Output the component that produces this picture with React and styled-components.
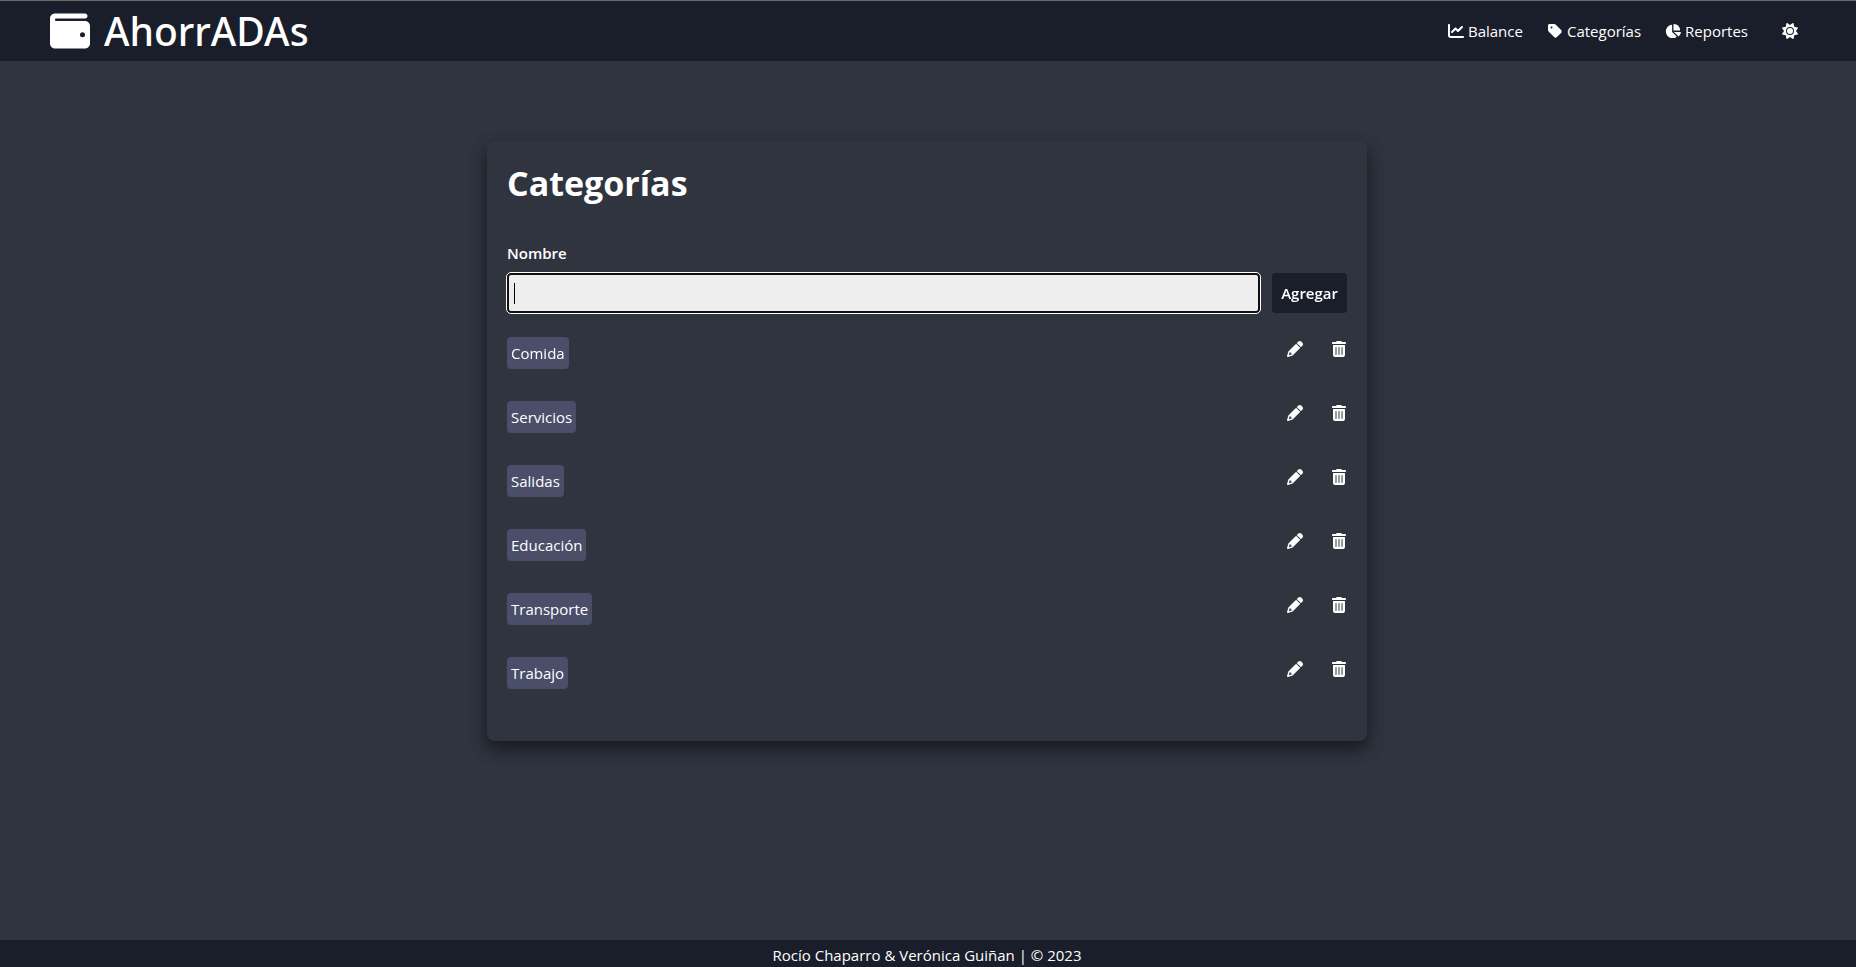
import React, { useState } from "react";
import styled, { createGlobalStyle } from "styled-components";
import {
  FaWallet,
  FaChartLine,
  FaTag,
  FaChartPie,
  FaSun,
  FaTrashCan,
} from "react-icons/fa6";

const colors = {
  page: "#30343f",
  bar: "#191e2a",
  chip: "#4a4e69",
  field: "#eeeeee",
  text: "#ffffff",
};

const GlobalStyle = createGlobalStyle`
  *, *::before, *::after { box-sizing: border-box; }
  body {
    margin: 0;
    background: ${colors.page};
    color: ${colors.text};
    font-family: "Segoe UI", "Open Sans", "Noto Sans", sans-serif;
    font-size: 15px;
    line-height: 24px;
  }
  h1, ul, p { margin: 0; padding: 0; }
  ul { list-style: none; }
  button, input { font: inherit; }
  svg { display: block; flex: none; }
`;

const Page = styled.div`
  min-height: 100vh;
  display: flex;
  flex-direction: column;
`;

const Header = styled.header`
  display: flex;
  align-items: center;
  justify-content: space-between;
  height: 61px;
  padding: 0 56px 0 50px;
  background: ${colors.bar};
  border-top: 1px solid #6a6a6a;
`;

const Brand = styled.a`
  display: flex;
  align-items: center;
  gap: 14px;
  color: inherit;
  text-decoration: none;
  font-family: "Segoe UI", "Noto Sans", sans-serif;
  font-size: 39px;
  font-weight: 500;
  line-height: 60px;
`;

const Nav = styled.nav`
  display: flex;
  align-items: center;
  gap: 24px;
`;

const NavLink = styled.a`
  display: flex;
  align-items: center;
  gap: 4px;
  color: inherit;
  text-decoration: none;

  svg {
    width: auto;
    height: 16px;
  }
`;

const IconButton = styled.button`
  display: flex;
  padding: 0;
  border: 0;
  background: none;
  color: inherit;
  cursor: pointer;

  svg {
    width: auto;
    height: 16px;
  }
`;

const ThemeButton = styled(IconButton)`
  padding: 0 2px 0 10px;
`;

const Main = styled.main`
  flex: 1;
  display: flex;
  justify-content: center;
  align-items: flex-start;
  padding: 80px 18px 80px 16px;
`;

const Card = styled.section`
  width: 100%;
  max-width: 880px;
  padding: 20px;
  border-radius: 8px;
  box-shadow: 0 8px 16px rgba(0, 0, 0, 0.4), 0 6px 20px rgba(0, 0, 0, 0.19);
`;

const Title = styled.h1`
  font-size: 34px;
  font-weight: 700;
  line-height: 44px;
  margin-bottom: 36px;
`;

const Label = styled.label`
  display: block;
  font-weight: 600;
  margin-bottom: 8px;
`;

const FormRow = styled.div`
  display: flex;
  gap: 12px;
  margin-bottom: 24px;
`;

const TextInput = styled.input`
  flex: 1;
  min-width: 0;
  height: 40px;
  padding: 0 5px;
  border: 2px solid #101010;
  border-radius: 4px;
  outline: 1px solid #ffffff;
  background: ${colors.field};
  color: #000000;

  &:focus:placeholder-shown {
    background: linear-gradient(#000000, #000000) 5px 8px / 1px 21px no-repeat ${colors.field};
  }
`;

const AddButton = styled.button`
  height: 40px;
  padding: 0 9px;
  border: 0;
  border-radius: 4px;
  background: ${colors.bar};
  color: inherit;
  font-weight: 600;
  cursor: pointer;
`;

const CategoryRow = styled.li`
  display: flex;
  align-items: flex-start;
  justify-content: space-between;
  height: 64px;
`;

const Chip = styled.span`
  padding: 4px;
  border-radius: 4px;
  background: ${colors.chip};
`;

const Actions = styled.div`
  display: flex;
  gap: 28px;
  padding-top: 4px;
`;

const Footer = styled.footer`
  height: 27px;
  padding: 3px 18px 0 16px;
  background: ${colors.bar};
  text-align: center;
`;

const PencilIcon = () => (
  <svg viewBox="0 0 512 512" fill="currentColor" aria-hidden="true">
    <path d="M410.3 231l11.3-11.3-33.9-33.9-62.1-62.1L291.7 89.8l-11.3 11.3-22.6 22.6L58.6 322.9c-10.4 10.4-18 23.3-22.2 37.4L1 480.7c-2.5 8.4-.2 17.5 6.1 23.7s15.3 8.5 23.7 6.1l120.3-35.4c14.1-4.2 27-11.8 37.4-22.2L387.7 253.7 410.3 231zM160 399.4l-9.1 22.7c-4 3.1-8.5 5.4-13.3 6.9L59.4 452l23-78.1c1.4-4.9 3.8-9.4 6.9-13.3l22.7-9.1v32c0 8.8 7.2 16 16 16h32z" />
    <path d="M362.7 18.7L348.3 33.2 325.7 55.8 314.3 67.1l33.9 33.9 62.1 62.1 33.9 33.9 11.3-11.3 22.6-22.6 14.5-14.5c25-25 25-65.5 0-90.5L453.3 18.7c-25-25-65.5-25-90.5 0z" />
  </svg>
);

const initial = ["Comida", "Servicios", "Salidas", "Educación", "Transporte", "Trabajo"];

export default function App() {
  const [categories, setCategories] = useState(initial);
  const [name, setName] = useState("");

  const add = (event) => {
    event.preventDefault();
    if (!name.trim()) return;
    setCategories([...categories, name.trim()]);
    setName("");
  };

  return (
    <>
      <GlobalStyle />
      <Page>
        <Header>
          <Brand href="#">
            <FaWallet size={40} />
            AhorrADAs
          </Brand>
          <Nav>
            <NavLink href="#balance"><FaChartLine />Balance</NavLink>
            <NavLink href="#categorias"><FaTag />Categorías</NavLink>
            <NavLink href="#reportes"><FaChartPie />Reportes</NavLink>
            <ThemeButton type="button" aria-label="Cambiar tema"><FaSun /></ThemeButton>
          </Nav>
        </Header>
        <Main>
          <Card>
            <Title>Categorías</Title>
            <form onSubmit={add}>
              <Label htmlFor="nombre">Nombre</Label>
              <FormRow>
                <TextInput
                  id="nombre"
                  autoFocus
                  autoComplete="off"
                  placeholder=" "
                  value={name}
                  onChange={(event) => setName(event.target.value)}
                />
                <AddButton type="submit">Agregar</AddButton>
              </FormRow>
            </form>
            <ul>
              {categories.map((category) => (
                <CategoryRow key={category}>
                  <Chip>{category}</Chip>
                  <Actions>
                    <IconButton type="button" aria-label={`Editar ${category}`}>
                      <PencilIcon />
                    </IconButton>
                    <IconButton
                      type="button"
                      aria-label={`Eliminar ${category}`}
                      onClick={() => setCategories(categories.filter((c) => c !== category))}
                    >
                      <FaTrashCan />
                    </IconButton>
                  </Actions>
                </CategoryRow>
              ))}
            </ul>
          </Card>
        </Main>
        <Footer>Rocío Chaparro &amp; Verónica Guiñan | © 2023</Footer>
      </Page>
    </>
  );
}
